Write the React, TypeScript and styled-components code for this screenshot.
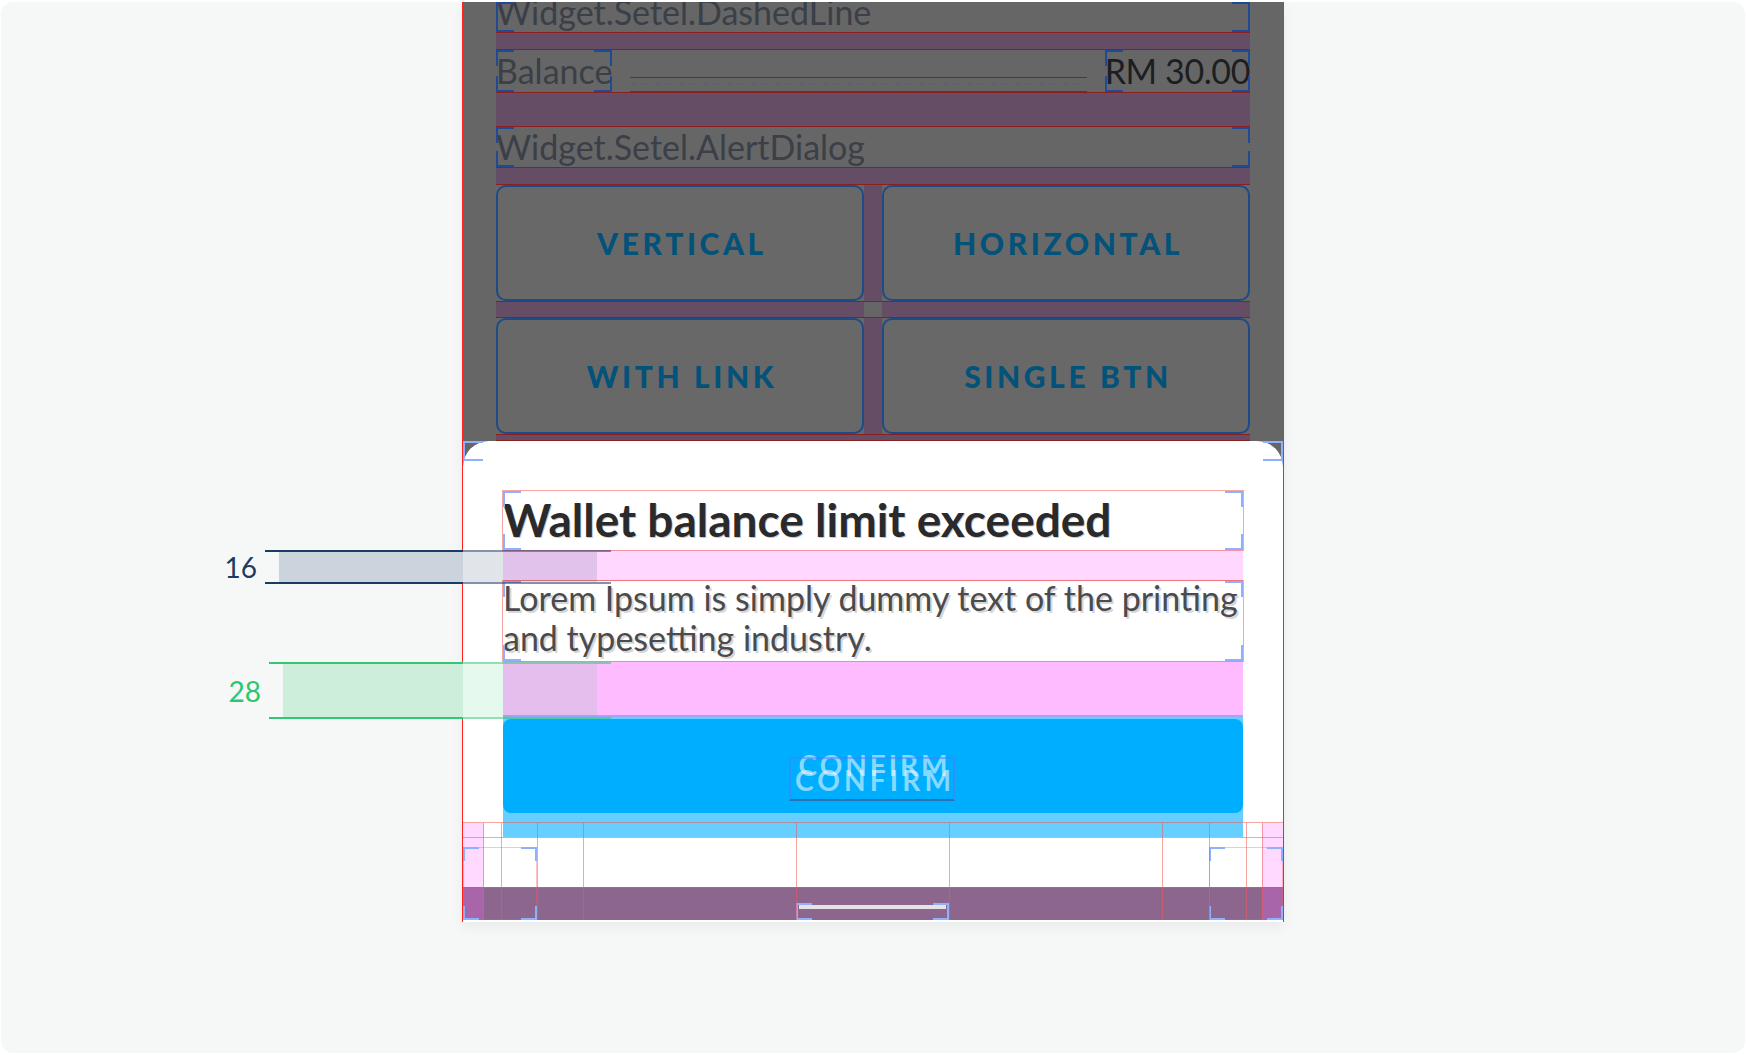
import React from "react";
import styled, { createGlobalStyle } from "styled-components";

const GRAY = "#666666";
const PURPLE = "#654d65";
const RED_DIM = "#8a2020";
const RED_SOFT = "rgba(238, 90, 90, 0.55)";
const MARK_DARK = "#1f4a96";
const MARK_LIGHT = "#8db0ff";

const GlobalStyle = createGlobalStyle`
  html, body {
    margin: 0;
    padding: 0;
    background: #ffffff;
  }
  body {
    font-family: Lato, "Open Sans", "DejaVu Sans", sans-serif;
  }
`;

const Page = styled.div`
  width: 1746px;
  height: 1055px;
  box-sizing: border-box;
  padding: 2px 1px 2px 1px;
`;

const Board = styled.div`
  position: relative;
  height: 100%;
  background: #f6f8f8;
  border-radius: 12px;
  overflow: hidden;
`;

const Phone = styled.div`
  position: relative;
  width: 822px;
  height: 920px;
  margin: 0 auto;
  box-sizing: border-box;
  background: ${GRAY};
  border-left: 1px solid #ff2020;
  border-right: 1px solid #ff2020;
  display: flex;
  flex-direction: column;
  overflow: hidden;
  box-shadow: 0 6px 12px rgba(0, 0, 0, 0.05);
`;

const Backdrop = styled.div`
  display: flex;
  flex-direction: column;
  padding: 0 33px;
`;

const Row = styled.div<{ $h: number }>`
  position: relative;
  height: ${(p) => p.$h}px;
  display: flex;
  align-items: stretch;
`;

const RowText = styled.span<{ $dark?: boolean; $shift?: number }>`
  position: relative;
  font-size: 34px;
  line-height: 36px;
  margin-top: ${(p) => p.$shift ?? 0}px;
  color: ${(p) => (p.$dark ? "#1c1e21" : "#3a3f48")};
  letter-spacing: ${(p) => (p.$dark ? "-0.4px" : "0")};
  white-space: nowrap;
`;

const Gap = styled.div<{ $h: number; $split?: boolean }>`
  height: ${(p) => p.$h}px;
  box-sizing: border-box;
  border-top: 1px solid ${RED_DIM};
  border-bottom: 1px solid ${RED_DIM};
  background: ${(p) =>
    p.$split
      ? `linear-gradient(to right, ${PURPLE} 368px, ${GRAY} 368px, ${GRAY} 386px, ${PURPLE} 386px)`
      : PURPLE};
`;

const Corner = styled.span<{ $v: "top" | "bottom"; $h: "left" | "right"; $c: string; $s: number }>`
  position: absolute;
  ${(p) => p.$v}: 0;
  ${(p) => p.$h}: 0;
  width: ${(p) => p.$s}px;
  height: ${(p) => Math.round(p.$s * 0.85)}px;
  border-${(p) => p.$v}: 2px solid ${(p) => p.$c};
  border-${(p) => p.$h}: 2px solid ${(p) => p.$c};
  pointer-events: none;
`;

function Corners({ color, size = 16 }: { color: string; size?: number }) {
  return (
    <>
      <Corner $v="top" $h="left" $c={color} $s={size} />
      <Corner $v="top" $h="right" $c={color} $s={size} />
      <Corner $v="bottom" $h="left" $c={color} $s={size} />
      <Corner $v="bottom" $h="right" $c={color} $s={size} />
    </>
  );
}

const Fill = styled.div`
  position: relative;
  flex: 1;
  display: flex;
  align-items: flex-start;
`;

const Label = styled.div`
  position: relative;
  display: flex;
  align-items: flex-start;
`;

const DashArea = styled.div`
  position: relative;
  flex: 1;
  align-self: flex-end;
  height: 15px;
  margin: 0 18px;
  box-sizing: border-box;
  border-top: 1px solid ${RED_DIM};
  border-bottom: 1px solid ${RED_DIM};
  display: flex;
  align-items: center;
`;

const Dashes = styled.div`
  width: 100%;
  height: 2px;
  margin-top: -1px;
  background-image: linear-gradient(to right, #5b6371 0, #5b6371 6px, transparent 6px);
  background-size: 12px 2px;
  background-repeat: repeat-x;
`;

const ButtonRow = styled.div`
  display: grid;
  grid-template-columns: 1fr 1fr;
  column-gap: 18px;
  height: 116px;
  background: linear-gradient(to right, transparent 368px, ${PURPLE} 368px, ${PURPLE} 386px, transparent 386px);
`;

const DemoButton = styled.div`
  display: flex;
  align-items: center;
  justify-content: center;
  box-sizing: border-box;
  border: 2px solid #1b4c88;
  border-radius: 10px;
  background: #686868;
  color: #03527a;
  font-size: 30px;
  font-weight: 900;
  letter-spacing: 3.6px;
  text-transform: uppercase;
  padding-left: 4px;
`;

const Sheet = styled.div`
  position: relative;
  flex: 1;
  display: flex;
  flex-direction: column;
  background: #ffffff;
  border-radius: 26px 26px 0 0;
`;

const SheetBody = styled.div`
  display: flex;
  flex-direction: column;
  padding: 50px 40px 0 40px;
`;

const TextBox = styled.div<{ $h: number }>`
  position: relative;
  height: ${(p) => p.$h}px;
  box-sizing: border-box;
  outline: 1px solid ${RED_SOFT};
`;

const Title = styled.h1`
  margin: 0;
  font-size: 46px;
  line-height: 58px;
  font-weight: 700;
  color: #2a2a2c;
  text-shadow: 1px 1px 0 rgba(0, 0, 0, 0.22);
  white-space: nowrap;
`;

const Body = styled.p`
  margin: -3px 0 0 0;
  font-size: 34px;
  line-height: 40px;
  color: #4b4b4d;
  text-shadow: 2px 2px 0 rgba(0, 0, 0, 0.18);
  white-space: nowrap;
`;

const Spacing = styled.div<{ $h: number; $strong?: boolean }>`
  height: ${(p) => p.$h}px;
  box-sizing: border-box;
  background: ${(p) => (p.$strong ? "#ffbbff" : "#ffd7ff")};
  border-bottom: ${(p) => (p.$strong ? "2px solid #9fa6ff" : `1px solid ${RED_SOFT}`)};
`;

const ButtonZone = styled.div`
  height: 120px;
  padding-top: 2px;
  box-sizing: border-box;
  background: #66cfff;
`;

const ConfirmButton = styled.div`
  position: relative;
  height: 94px;
  background: #00aeff;
  border-radius: 8px;
  overflow: hidden;
`;

const GhostLabel = styled.span<{ $top: number; $spacing: number }>`
  position: absolute;
  left: 0;
  right: 0;
  top: ${(p) => p.$top}px;
  text-align: center;
  font-size: 28px;
  line-height: 28px;
  font-weight: 700;
  letter-spacing: ${(p) => p.$spacing}px;
  padding-left: ${(p) => p.$spacing}px;
  color: rgba(255, 255, 255, 0.55);
`;

const LabelFrame = styled.span`
  position: absolute;
  left: 286px;
  top: 38px;
  width: 166px;
  height: 44px;
  box-sizing: border-box;
  border: 2px solid rgba(80, 120, 255, 0.5);
  border-bottom-color: rgba(70, 70, 120, 0.55);
`;

const NavArea = styled.div`
  position: relative;
  margin-top: -15px;
  height: 98px;
  display: flex;
  flex-direction: column;
  border-top: 1px solid ${RED_SOFT};
  box-sizing: border-box;
`;

const NavSpace = styled.div`
  height: 65px;
  display: flex;
  justify-content: space-between;
`;

const PinkSide = styled.div`
  width: 21px;
  background: #ffd9ff;
`;

const NavBar = styled.div`
  position: relative;
  height: 32px;
  display: flex;
  justify-content: space-between;
  background: #8c668c;
  border-top: 1px solid ${RED_SOFT};
`;

const NavEdge = styled.div`
  width: 21px;
  background: #a866a8;
`;

const HomeSlot = styled.div`
  position: absolute;
  left: 333px;
  bottom: 0;
  width: 153px;
  height: 17px;
`;

const HomeBar = styled.div`
  margin: 2px 3px 0;
  height: 4px;
  background: #e6e2e6;
`;

const GuideLine = styled.span`
  position: absolute;
  top: 0;
  bottom: 0;
  width: 1px;
  background: ${RED_SOFT};
`;

const BandLine = styled.span`
  position: absolute;
  left: 0;
  right: 0;
  top: 14px;
  height: 1px;
  background: ${RED_SOFT};
`;

const NavBox = styled.div<{ $left: number }>`
  position: absolute;
  left: ${(p) => p.$left}px;
  top: 24px;
  width: 74px;
  height: 73px;
  box-shadow: inset 0 0 0 1px rgba(238, 90, 90, 0.35);
`;

const SheetMarks = styled.div`
  position: absolute;
  left: 0;
  right: 0;
  top: 0;
  height: 20px;
  pointer-events: none;
`;

/* spec annotations drawn over the board */
const Spec = styled.div<{ $top: number; $left: number; $h: number }>`
  position: absolute;
  top: ${(p) => p.$top}px;
  left: ${(p) => p.$left}px;
  width: ${(p) => 610 - p.$left}px;
  height: ${(p) => p.$h}px;
`;

const SpecLine = styled.span<{ $edge: "top" | "bottom"; $solid: string; $soft: string; $cut: number }>`
  position: absolute;
  left: 0;
  right: 0;
  ${(p) => p.$edge}: 0;
  height: 2px;
  background: linear-gradient(
    to right,
    ${(p) => p.$solid} ${(p) => p.$cut}px,
    ${(p) => p.$soft} ${(p) => p.$cut}px
  );
`;

const SpecFill = styled.span<{ $solid: string; $soft: string; $cut: number }>`
  position: absolute;
  left: 14px;
  right: 14px;
  top: 2px;
  bottom: 2px;
  background: linear-gradient(
    to right,
    ${(p) => p.$solid} ${(p) => p.$cut - 14}px,
    ${(p) => p.$soft} ${(p) => p.$cut - 14}px
  );
`;

const SpecValue = styled.span<{ $color: string }>`
  position: absolute;
  right: calc(100% + 8px);
  top: 50%;
  transform: translateY(-50%);
  font-size: 28px;
  line-height: 34px;
  color: ${(p) => p.$color};
`;

type SpecProps = {
  value: string;
  top: number;
  left: number;
  height: number;
  line: string;
  lineSoft: string;
  fill: string;
  fillSoft: string;
  text: string;
};

function SpecMark({ value, top, left, height, line, lineSoft, fill, fillSoft, text }: SpecProps) {
  const cut = 462 - left;
  return (
    <Spec $top={top} $left={left} $h={height}>
      <SpecFill $solid={fill} $soft={fillSoft} $cut={cut} />
      <SpecLine $edge="top" $solid={line} $soft={lineSoft} $cut={cut} />
      <SpecLine $edge="bottom" $solid={line} $soft={lineSoft} $cut={cut} />
      <SpecValue $color={text}>{value}</SpecValue>
    </Spec>
  );
}

const guides = [20, 38, 74, 120, 333, 486, 699, 746, 783, 799];

export default function App() {
  return (
    <Page>
      <GlobalStyle />
      <Board>
        <Phone>
          <Backdrop>
            <Row $h={30}>
              <Fill>
                <RowText $shift={-8}>Widget.Setel.DashedLine</RowText>
                <Corners color={MARK_DARK} />
              </Fill>
            </Row>
            <Gap $h={18} />
            <Row $h={42}>
              <Label>
                <RowText $shift={3}>Balance</RowText>
                <Corners color={MARK_DARK} />
              </Label>
              <DashArea>
                <Dashes />
              </DashArea>
              <Label>
                <RowText $dark $shift={3}>RM 30.00</RowText>
                <Corners color={MARK_DARK} />
              </Label>
            </Row>
            <Gap $h={35} />
            <Row $h={40}>
              <Fill>
                <RowText $shift={2}>Widget.Setel.AlertDialog</RowText>
                <Corners color={MARK_DARK} />
              </Fill>
            </Row>
            <Gap $h={18} />
            <ButtonRow>
              <DemoButton>Vertical</DemoButton>
              <DemoButton>Horizontal</DemoButton>
            </ButtonRow>
            <Gap $h={17} $split />
            <ButtonRow>
              <DemoButton>With link</DemoButton>
              <DemoButton>Single btn</DemoButton>
            </ButtonRow>
            <Gap $h={7} />
          </Backdrop>

          <Sheet>
            <SheetMarks>
              <Corners color={MARK_LIGHT} size={18} />
            </SheetMarks>
            <SheetBody>
              <TextBox $h={59}>
                <Title>Wallet balance limit exceeded</Title>
                <Corners color={MARK_LIGHT} />
              </TextBox>
              <Spacing $h={31} />
              <TextBox $h={80}>
                <Body>
                  Lorem Ipsum is simply dummy text of the printing
                  <br />
                  and typesetting industry.
                </Body>
                <Corners color={MARK_LIGHT} />
              </TextBox>
              <Spacing $h={56} $strong />
              <ButtonZone>
                <ConfirmButton>
                  <GhostLabel $top={32} $spacing={3}>CONFIRM</GhostLabel>
                  <GhostLabel $top={47} $spacing={4.2}>CONFIRM</GhostLabel>
                  <LabelFrame />
                </ConfirmButton>
              </ButtonZone>
            </SheetBody>
            <NavArea>
              <BandLine />
              <NavSpace>
                <PinkSide />
                <PinkSide />
              </NavSpace>
              <NavBar>
                <NavEdge />
                <HomeSlot>
                  <HomeBar />
                  <Corners color={MARK_LIGHT} size={14} />
                </HomeSlot>
                <NavEdge />
              </NavBar>
              <NavBox $left={0}>
                <Corners color={MARK_LIGHT} size={14} />
              </NavBox>
              <NavBox $left={746}>
                <Corners color={MARK_LIGHT} size={14} />
              </NavBox>
              {guides.map((x) => (
                <GuideLine key={x} style={{ left: x }} />
              ))}
            </NavArea>
          </Sheet>
        </Phone>

        <SpecMark
          value="16"
          top={548}
          left={264}
          height={34}
          line="#1b3b62"
          lineSoft="rgba(27, 59, 98, 0.55)"
          fill="#cbd4dc"
          fillSoft="rgba(29, 61, 99, 0.135)"
          text="#1b3b62"
        />
        <SpecMark
          value="28"
          top={660}
          left={268}
          height={57}
          line="#33c774"
          lineSoft="rgba(51, 199, 116, 0.55)"
          fill="#cdeedb"
          fillSoft="rgba(46, 204, 113, 0.12)"
          text="#2ec56f"
        />
      </Board>
    </Page>
  );
}
